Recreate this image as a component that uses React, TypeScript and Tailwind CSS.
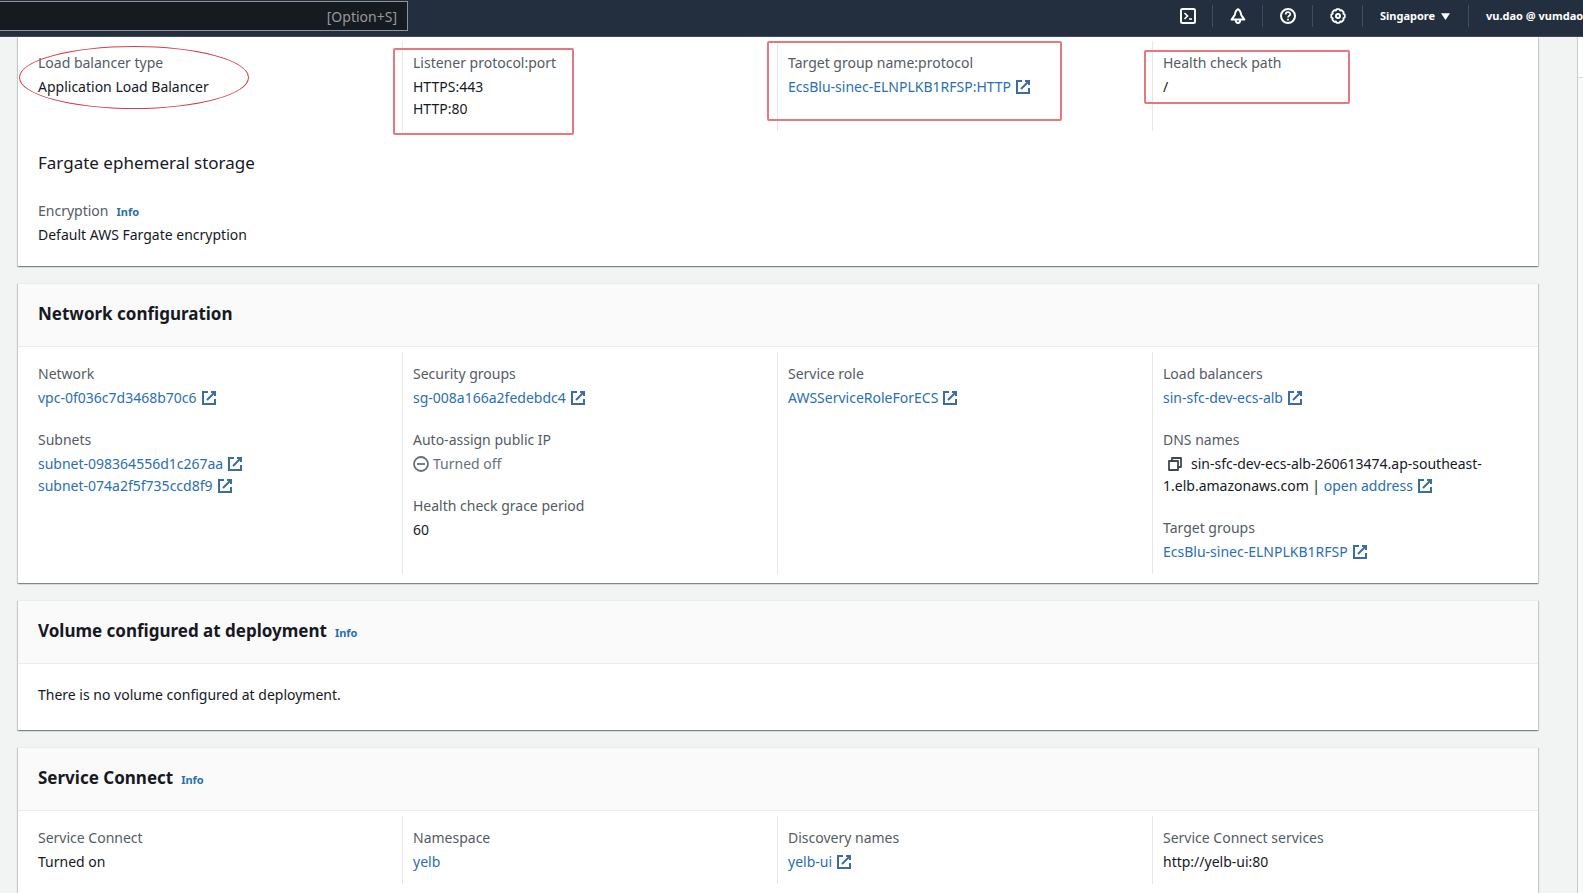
import type { ReactNode } from 'react';

const linkStyles = 'text-[#2a6fb0] hover:underline';

function ExternalIcon() {
  return (
    <svg viewBox="0 0 16 16" className="ml-1 inline-block size-4 align-[-3px]" fill="none" stroke="#3c6d9f" strokeWidth="2" aria-hidden="true">
      <path d="M10 2h4v4M6 10l8-8" />
      <path d="M14 9.05V14H2V2h5" />
    </svg>
  );
}

function ExternalLink({ children }: { children: ReactNode }) {
  return (
    <a href="#" className={linkStyles}>
      {children}
      <ExternalIcon />
    </a>
  );
}

function InfoLink() {
  return (
    <a href="#" className="ml-2 text-[11px] leading-4 font-bold text-[#2a6fb0] hover:underline">
      Info
    </a>
  );
}

function Field({ label, info, children }: { label: string; info?: boolean; children: ReactNode }) {
  return (
    <dl>
      <dt className="mb-0.5 text-[#545b64]">
        {label}
        {info && <InfoLink />}
      </dt>
      <dd>{children}</dd>
    </dl>
  );
}

function Columns({ children }: { children: ReactNode }) {
  return <div className="grid grid-cols-4 divide-x divide-[#e4e8e8] px-2.5 pt-[5px] pb-[9px]">{children}</div>;
}

function Column({ children }: { children: ReactNode }) {
  return <div className="relative flex flex-col gap-5 px-2.5 py-[11px]">{children}</div>;
}

function Card({ title, info, children }: { title?: string; info?: boolean; children: ReactNode }) {
  return (
    <section className="bg-white shadow-[0_1px_1px_0_rgba(0,28,36,0.3),1px_1px_1px_0_rgba(0,28,36,0.15),-1px_1px_1px_0_rgba(0,28,36,0.15)]">
      {title && (
        <header className="flex h-16 items-center border-y border-[#eaeded] bg-[#fafafa] px-5 pb-0.5">
          <h2 className="text-[17px] leading-[22px] font-bold">
            {title}
            {info && <InfoLink />}
          </h2>
        </header>
      )}
      {children}
    </section>
  );
}

function NavButton({ label, children }: { label: string; children: ReactNode }) {
  return (
    <button aria-label={label} className="flex h-[22px] w-[50px] shrink-0 items-center justify-center border-r border-[#414d5c]">
      <svg viewBox="0 0 16 16" className="size-4" fill="none" stroke="currentColor" strokeWidth="2">
        {children}
      </svg>
    </button>
  );
}

function TopBar() {
  return (
    <header className="flex h-[37px] shrink-0 items-start justify-between border-b border-[#3b4a59] bg-[#232f3e] text-white">
      <label className="mt-px flex h-[30px] w-[408px] items-center border border-l-0 border-[#8d9499] bg-[#161a21] pt-0.5 pr-2.5">
        <input type="search" aria-label="Search" className="min-w-0 flex-1 bg-transparent px-3 outline-none" />
        <span className="text-[#95999c]">[Option+S]</span>
      </label>
      <nav className="flex w-[420px] items-center overflow-hidden pt-[5px] text-[11px] font-bold whitespace-nowrap">
        <NavButton label="CloudShell">
          <rect x="1" y="1" width="14" height="14" rx="1.5" />
          <path d="M4.5 5l3 3-3 3M9 11h3" strokeWidth="1.6" />
        </NavButton>
        <NavButton label="Notifications">
          <path d="M8 1.2C5.6 2.4 5.2 4.6 4.7 7.2L1.6 11.6h12.8L11.3 7.2C10.8 4.6 10.4 2.4 8 1.2z" strokeLinejoin="round" />
          <path d="M5.8 12c0 4 4.4 4 4.4 0" strokeWidth="1.8" />
        </NavButton>
        <NavButton label="Help">
          <circle cx="8" cy="8" r="7" />
          <path d="M5.7 6.4C5.7 3.4 10.3 3.5 10.3 6.2 10.3 7.8 8 7.8 8 9.6M8 10.7v1.7" strokeWidth="1.7" />
        </NavButton>
        <NavButton label="Settings">
          <path
            d="M6.6 1.2h2.8l.7 1.3 1.5-.3 2 2-.3 1.5 1.4.8v3l-1.4.8.3 1.5-2 2-1.5-.3-.7 1.3H6.6l-.7-1.3-1.5.3-2-2 .3-1.5-1.4-.8v-3l1.4-.8-.3-1.5 2-2 1.5.3z"
            strokeWidth="1.8"
            strokeLinejoin="round"
          />
          <circle cx="8" cy="8" r="2" />
        </NavButton>
        <button className="flex h-[22px] w-[106px] shrink-0 items-center gap-1.5 border-r border-[#414d5c] pl-[17px]">
          Singapore
          <svg viewBox="0 0 8 6" className="h-[7px] w-[9px]" fill="currentColor" aria-hidden="true">
            <path d="M0 0h8L4 6z" />
          </svg>
        </button>
        <button className="h-[22px] pl-[17px]">vu.dao @ vumdao</button>
      </nav>
    </header>
  );
}

export default function App() {
  return (
    <div className="flex h-screen flex-col overflow-hidden bg-[#f2f3f3] font-['Noto_Sans',sans-serif] text-sm leading-[22px] text-[#16191f]">
      <TopBar />
      <div className="flex min-h-0 flex-1">
        <main className="flex min-w-0 flex-1 flex-col gap-[17px] overflow-hidden pr-[39px] pl-[18px]">
          <Card>
            <div className="grid grid-cols-4 divide-x divide-[#e4e8e8] px-2.5 pt-1">
              <Column>
                <Field label="Load balancer type">Application Load Balancer</Field>
                <div className="absolute top-[5px] -left-[9px] h-[63px] w-[230px] rounded-[50%] border border-[#d0404a]" />
              </Column>
              <Column>
                <Field label="Listener protocol:port">
                  <p>HTTPS:443</p>
                  <p>HTTP:80</p>
                </Field>
                <div className="absolute top-[7px] -left-[10px] h-[87px] w-[181px] rounded-xs border-2 border-[#e3797f]" />
              </Column>
              <Column>
                <Field label="Target group name:protocol">
                  <ExternalLink>EcsBlu-sinec-ELNPLKB1RFSP:HTTP</ExternalLink>
                </Field>
                <div className="absolute top-0 -left-[11px] h-20 w-[295px] rounded-xs border-2 border-[#e3797f]" />
              </Column>
              <Column>
                <Field label="Health check path">/</Field>
                <div className="absolute top-[9px] -left-[9px] h-[54px] w-[206px] rounded-xs border-2 border-[#e3797f]" />
              </Column>
            </div>
            <div className="px-5 pt-[21px] pb-5">
              <h3 className="mb-[26px] text-[17px] leading-[22px]">Fargate ephemeral storage</h3>
              <Field label="Encryption" info>
                Default AWS Fargate encryption
              </Field>
            </div>
          </Card>

          <Card title="Network configuration">
            <Columns>
              <Column>
                <Field label="Network">
                  <ExternalLink>vpc-0f036c7d3468b70c6</ExternalLink>
                </Field>
                <Field label="Subnets">
                  <p>
                    <ExternalLink>subnet-098364556d1c267aa</ExternalLink>
                  </p>
                  <p>
                    <ExternalLink>subnet-074a2f5f735ccd8f9</ExternalLink>
                  </p>
                </Field>
              </Column>
              <Column>
                <Field label="Security groups">
                  <ExternalLink>sg-008a166a2fedebdc4</ExternalLink>
                </Field>
                <Field label="Auto-assign public IP">
                  <span className="flex items-center gap-1 text-[#687078]">
                    <svg viewBox="0 0 16 16" className="size-4" fill="none" stroke="currentColor" strokeWidth="1.8" aria-hidden="true">
                      <circle cx="8" cy="8" r="7" />
                      <path d="M4 8h8" />
                    </svg>
                    Turned off
                  </span>
                </Field>
                <Field label="Health check grace period">60</Field>
              </Column>
              <Column>
                <Field label="Service role">
                  <ExternalLink>AWSServiceRoleForECS</ExternalLink>
                </Field>
              </Column>
              <Column>
                <Field label="Load balancers">
                  <ExternalLink>sin-sfc-dev-ecs-alb</ExternalLink>
                </Field>
                <Field label="DNS names">
                  <button aria-label="Copy DNS name" className="mr-2 ml-1 inline-block size-4 align-[-3px]">
                    <svg viewBox="0 0 16 16" className="size-4" fill="none" stroke="#414750" strokeWidth="1.8">
                      <path d="M2 5h9v9H2z" strokeLinejoin="round" />
                      <path d="M5 5V2h9v9h-3" strokeLinejoin="round" />
                    </svg>
                  </button>
                  sin-sfc-dev-ecs-alb-260613474.ap-southeast-1.elb.amazonaws.com | <ExternalLink>open address</ExternalLink>
                </Field>
                <Field label="Target groups">
                  <ExternalLink>EcsBlu-sinec-ELNPLKB1RFSP</ExternalLink>
                </Field>
              </Column>
            </Columns>
          </Card>

          <Card title="Volume configured at deployment" info>
            <p className="px-5 pt-5 pb-6">There is no volume configured at deployment.</p>
          </Card>

          <Card title="Service Connect" info>
            <Columns>
              <Column>
                <Field label="Service Connect">Turned on</Field>
              </Column>
              <Column>
                <Field label="Namespace">
                  <a href="#" className={linkStyles}>
                    yelb
                  </a>
                </Field>
              </Column>
              <Column>
                <Field label="Discovery names">
                  <ExternalLink>yelb-ui</ExternalLink>
                </Field>
              </Column>
              <Column>
                <Field label="Service Connect services">http://yelb-ui:80</Field>
              </Column>
            </Columns>
          </Card>
        </main>
        <aside className="w-1.5 shrink-0 border-l border-[#c9cccc] bg-[#fafafa]">
          <div className="h-[41px] border-b border-[#d5dbdb] bg-white" />
        </aside>
      </div>
    </div>
  );
}
